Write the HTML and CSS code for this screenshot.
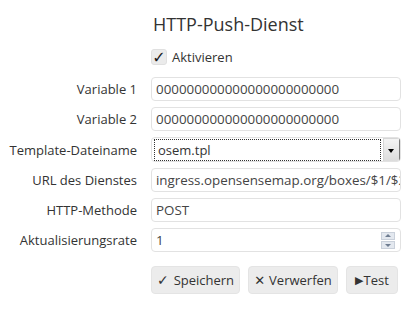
FILE: index.html
```html
<!DOCTYPE html>
<html>
<head>
    <meta charset="UTF-8">
    <meta name="viewport" content="width=device-width, initial-scale=1.0">
    <title>HTTP-Push-Dienst</title>
    <link rel="stylesheet" href="styles.css">
</head>
<body>
    <div class="form">
        <div class="row title-row">
            <span></span>
            <h2 class="title">HTTP-Push-Dienst</h2>
        </div>

        <div class="row check-row">
            <span></span>
            <label class="check"><span class="box">&#10003;</span>Aktivieren</label>
        </div>

        <div class="fields">
            <div class="row">
                <span class="label">Variable 1</span>
                <div class="field">000000000000000000000000</div>
            </div>
            <div class="row">
                <span class="label">Variable 2</span>
                <div class="field">000000000000000000000000</div>
            </div>
            <div class="row">
                <span class="label">Template-Dateiname</span>
                <div class="field select">
                    <span class="select-value">osem.tpl</span>
                    <span class="select-arrow"></span>
                </div>
            </div>
            <div class="row">
                <span class="label">URL des Dienstes</span>
                <div class="field">ingress.opensensemap.org/boxes/$1/$2/data</div>
            </div>
            <div class="row">
                <span class="label">HTTP-Methode</span>
                <div class="field">POST</div>
            </div>
            <div class="row">
                <span class="label">Aktualisierungsrate</span>
                <div class="field number">
                    <span>1</span>
                    <span class="spinner">
                        <span class="spin up"></span>
                        <span class="spin down"></span>
                    </span>
                </div>
            </div>
        </div>

        <div class="row actions">
            <span></span>
            <div class="buttons">
                <button class="btn save"><span class="icon">&#10003;</span>Speichern</button>
                <button class="btn discard"><span class="icon cross">&#10005;</span>Verwerfen</button>
                <button class="btn test"><span class="icon play">&#9654;</span>Test</button>
            </div>
        </div>
    </div>
</body>
</html>
```

FILE: styles.css
```css
body {
    margin: 0;
    background-color: #fff;
    font-family: 'Open Sans', 'Liberation Sans', sans-serif;
    font-size: 13px;
    color: #333;
}

.form {
    padding-top: 12px;
}

.row {
    display: grid;
    grid-template-columns: 137px 250px;
    column-gap: 14px;
    align-items: center;
}

.title {
    margin: 0 0 0 2px;
    font-size: 18px;
    font-weight: normal;
    line-height: 24px;
    color: #333;
}

.check-row {
    margin-top: 13px;
}

.check {
    display: flex;
    align-items: center;
    height: 16px;
}

.box {
    width: 16px;
    height: 16px;
    box-sizing: border-box;
    border-radius: 3px;
    background-color: #ebebeb;
    border: 1px solid #e0e0e0;
    margin-right: 5px;
    font-family: 'DejaVu Sans', sans-serif;
    font-size: 16px;
    line-height: 15px;
    text-align: center;
    color: #1a1a1a;
    font-weight: bold;
}

.fields {
    display: flex;
    flex-direction: column;
    gap: 6px;
    margin-top: 12px;
}

.label {
    text-align: right;
    white-space: nowrap;
}

.field {
    height: 24px;
    box-sizing: border-box;
    border: 1px solid #e2e2e2;
    border-radius: 4px;
    padding: 0 4px;
    font-size: 13.35px;
    line-height: 22px;
    color: #444;
    white-space: nowrap;
    overflow: hidden;
}

.select {
    display: flex;
    height: 25px;
    padding: 1px 0 0 2px;
    font-size: 13px;
    line-height: 20px;
}

.select-value {
    flex: 1;
    height: 22px;
    box-sizing: border-box;
    border: 1px dotted #333;
    padding-left: 3px;
    color: #333;
    margin-right: 2px;
}

.select-arrow {
    width: 17px;
    height: 24px;
    margin-top: -1px;
    box-sizing: border-box;
    background: linear-gradient(#f4f4f4, #dcdcdc);
    border: 1px solid #7a7a7a;
    border-top-color: #d6d6d6;
    border-left-color: #d6d6d6;
    position: relative;
}

.select-arrow::after {
    content: "";
    position: absolute;
    left: 4px;
    top: 10px;
    border-left: 3.5px solid transparent;
    border-right: 3.5px solid transparent;
    border-top: 4px solid #000;
}

.number {
    display: flex;
    justify-content: space-between;
    align-items: center;
    line-height: 22px;
    padding-right: 5px;
}

.spinner {
    display: flex;
    flex-direction: column;
    gap: 1px;
}

.spin {
    width: 12px;
    height: 6px;
    background-color: #e3e8ef;
    border: 1px solid #c9d0da;
    box-sizing: content-box;
    position: relative;
}

.spin::after {
    content: "";
    position: absolute;
    left: 3px;
    border-left: 3px solid transparent;
    border-right: 3px solid transparent;
}

.up::after {
    top: 1px;
    border-bottom: 3px solid #6f7d91;
}

.down::after {
    top: 2px;
    border-top: 3px solid #6f7d91;
}

.actions {
    margin-top: 14px;
}

.buttons {
    display: flex;
    gap: 8px;
}

.btn {
    height: 28px;
    padding: 0;
    border: 1px solid #e4e4e4;
    border-radius: 4px;
    background-color: #ececec;
    font-family: inherit;
    font-size: 13px;
    color: #333;
    display: flex;
    align-items: center;
    justify-content: center;
}

.save {
    width: 89px;
}

.discard {
    width: 90px;
}

.test {
    width: 52px;
}

.icon {
    font-family: 'DejaVu Sans', sans-serif;
    font-size: 14px;
    margin-right: 5px;
}

.cross {
    font-size: 13px;
    font-weight: bold;
    margin-right: 4px;
}

.play {
    font-size: 11px;
    margin-right: 0;
}
```
